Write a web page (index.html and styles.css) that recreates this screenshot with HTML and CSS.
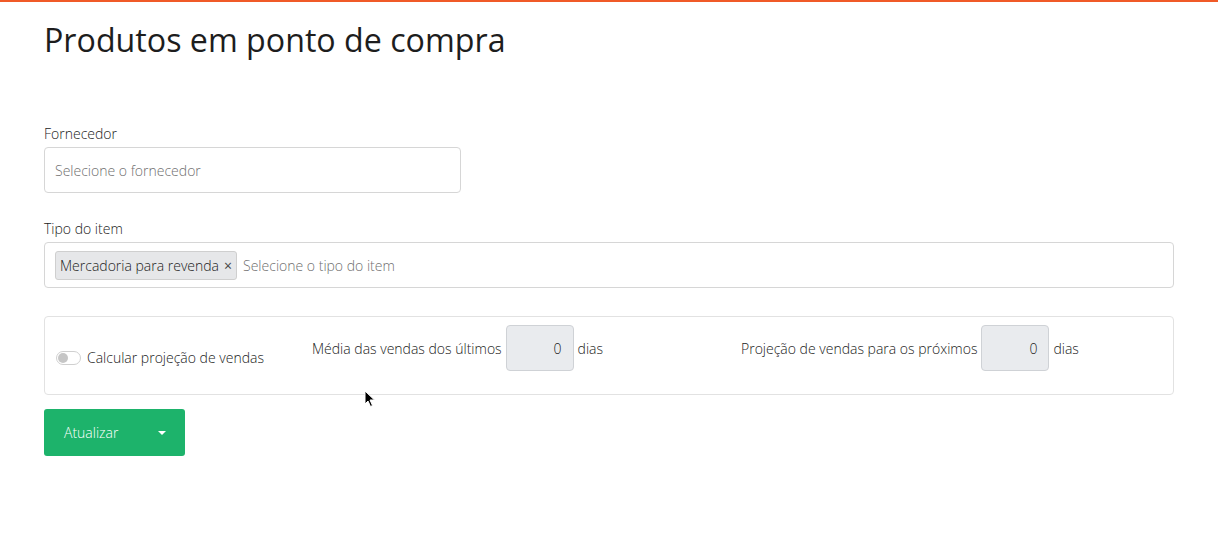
FILE: index.html
```html
<!DOCTYPE html>
<html lang="pt">
<head>
<meta charset="utf-8">
<link rel="stylesheet" href="styles.css">
</head>
<body>
<div class="topbar"></div>
<main class="page">
  <h1 class="title">Produtos em ponto de compra</h1>

  <div class="field field-narrow">
    <label class="label">Fornecedor</label>
    <div class="select"><span class="placeholder">Selecione o fornecedor</span></div>
  </div>

  <div class="field">
    <label class="label">Tipo do item</label>
    <div class="select select-multi">
      <span class="tag">Mercadoria para revenda <span class="tag-x">×</span></span>
      <span class="placeholder">Selecione o tipo do item</span>
    </div>
  </div>

  <div class="panel">
    <div class="cell cell-toggle">
      <span class="switch"><span class="knob"></span></span>
      <span class="text">Calcular projeção de vendas</span>
    </div>
    <div class="cell">
      <span class="text">Média das vendas dos últimos</span>
      <span class="num">0</span>
      <span class="text">dias</span>
    </div>
    <div class="cell">
      <span class="text">Projeção de vendas para os próximos</span>
      <span class="num">0</span>
      <span class="text">dias</span>
    </div>
  </div>

  <button class="btn">
    <span>Atualizar</span>
    <span class="caret"></span>
  </button>
</main>
<svg class="cursor" width="12" height="18" viewBox="0 0 12 18"><path d="M1 1 L1 14 L4 11 L6.5 16.5 L8.5 15.5 L6 10 L10.5 10 Z" fill="#000" stroke="#fff" stroke-width="1"/></svg>
</body>
</html>
```
FILE: styles.css
```css
* { box-sizing: border-box; }
html, body { margin: 0; padding: 0; background: #fff; }
body {
  font-family: "Open Sans", "Noto Sans", sans-serif;
  font-weight: 300;
  color: #222;
  font-size: 14px;
  position: relative;
  height: 538px;
  overflow: hidden;
}
.topbar { height: 2px; background: #f05a28; }
.page { padding: 0 44px; }
.title {
  font-weight: 400;
  font-size: 32.2px;
  line-height: 40px;
  margin: 18px 0 0;
  color: #1d1d1d;
}
.field-narrow { width: 417px; margin-top: 64px; }
.field + .field { margin-top: 26px; }
.label {
  display: block;
  line-height: 20px;
  margin-bottom: 3px;
  color: #222;
}
.select {
  height: 46px;
  border: 1px solid #d6d6d6;
  border-radius: 4px;
  display: flex;
  align-items: center;
  padding: 0 10px;
  gap: 6px;
}
.placeholder { color: #6f6f6f; }
.tag {
  background: #e6e7e9;
  border: 1px solid #cfcfcf;
  border-radius: 3px;
  height: 29px;
  display: inline-flex;
  align-items: center;
  padding: 0 4px 0 4px;
  color: #222;
}
.tag-x { margin-left: 5px; font-size: 14px; font-weight: 400; color: #444; }
.panel {
  margin-top: 28px;
  height: 79px;
  border: 1px solid #e2e2e2;
  border-radius: 4px;
  display: grid;
  grid-template-columns: 256px 429px 1fr;
  align-items: start;
  padding: 8px 11px 0;
}
.cell { display: flex; align-items: center; }
.cell-toggle { padding-top: 23px; }
.text { color: #222; }
.switch {
  width: 25px;
  height: 14px;
  border: 1px solid #d0d0d0;
  border-radius: 7px;
  margin-right: 6px;
  position: relative;
  display: inline-block;
}
.knob {
  position: absolute;
  left: 1px;
  top: 1px;
  width: 10px;
  height: 10px;
  border-radius: 50%;
  background: #c6c6c6;
}
.num {
  width: 68px;
  height: 46px;
  margin: 0 4px;
  background: #e9ebee;
  border: 1px solid #cfd2d6;
  border-radius: 4px;
  display: flex;
  align-items: center;
  justify-content: flex-end;
  padding-right: 11px;
  color: #222;
}
.btn {
  margin-top: 14px;
  width: 141px;
  height: 47px;
  background: #1db36b;
  border: none;
  border-radius: 3px;
  color: #fff;
  font-family: inherit;
  font-weight: 300;
  font-size: 14px;
  display: flex;
  align-items: center;
  justify-content: space-between;
  padding: 0 19px 0 20px;
}
.caret {
  width: 0; height: 0;
  border-left: 4px solid transparent;
  border-right: 4px solid transparent;
  border-top: 4px solid #fff;
}
.cursor { position: absolute; left: 364px; top: 390px; }
```
